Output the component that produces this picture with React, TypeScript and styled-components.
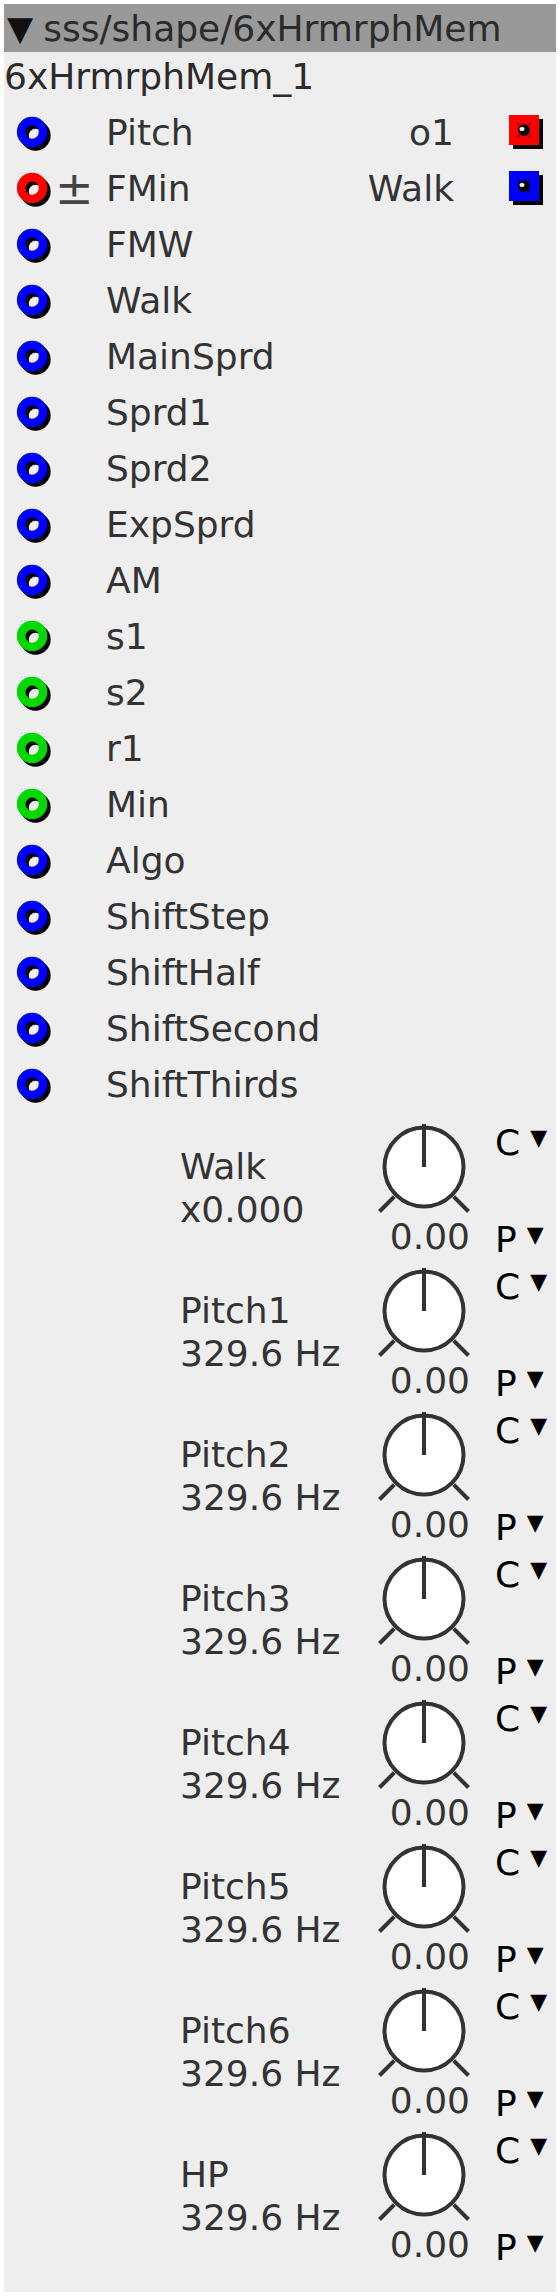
import styled, { createGlobalStyle } from "styled-components";

const GlobalStyle = createGlobalStyle`
    html, body {
        margin: 0;
        padding: 0;
        background: #ffffff;
    }

    body {
        padding: 4px;
        font-family: "DejaVu Sans", "Liberation Sans", sans-serif;
        font-size: 36px;
        color: #333333;
    }
`;

const Panel = styled.div`
    width: 552px;
    background-color: #eeeeee;
    padding-bottom: 24px;
`;

const TitleBar = styled.div`
    height: 48px;
    display: flex;
    align-items: center;
    gap: 10px;
    padding-left: 3px;
    background-color: #999999;
    color: #2b2b2b;
    white-space: nowrap;

    .arrow {
        font-size: 34px;
        color: #111111;
    }
`;

const InstanceName = styled.div`
    height: 48px;
    display: flex;
    align-items: center;
    color: #2b2b2b;
`;

const PortList = styled.div`
    padding-top: 4px;
    padding-bottom: 4px;
`;

const PortRow = styled.div`
    height: 56px;
    display: grid;
    grid-template-columns: 50px 52px 1fr auto 102px;
    align-items: center;
`;

const PortCell = styled.div`
    display: flex;
    align-items: center;
    padding-left: 10px;
    padding-top: 3px;
`;

const SignCell = styled.div`
    padding-left: 1px;
    font-size: 46px;
    line-height: 1;
    color: #444444;
`;

const PortLabel = styled.div`
    white-space: nowrap;
`;

const OutLabel = styled.div`
    text-align: right;
    white-space: nowrap;
`;

const OutCell = styled.div`
    display: flex;
    justify-content: flex-end;
    padding-right: 11px;
    padding-top: 2px;
`;

const KnobList = styled.div`
    display: flex;
    flex-direction: column;
`;

const KnobBlock = styled.div`
    height: 144px;
    display: flex;
    padding-left: 176px;
`;

const KnobText = styled.div`
    width: 198px;
    display: flex;
    flex-direction: column;
    justify-content: center;
    line-height: 43px;
    white-space: nowrap;
`;

const KnobColumn = styled.div`
    width: 92px;
    display: flex;
    flex-direction: column;
    padding-top: 5px;
`;

const KnobValue = styled.div`
    line-height: 40px;
    text-align: right;
    white-space: nowrap;
`;

const ModeColumn = styled.div`
    display: flex;
    flex-direction: column;
    justify-content: space-between;
    padding-top: 7px;
    margin-left: 25px;
`;

const ModeSelect = styled.div`
    line-height: 40px;
    color: #000000;
    display: flex;
    align-items: flex-start;
    gap: 10px;

    span {
        font-size: 22px;
        line-height: 30px;
    }
`;

const portColors: Record<string, string> = {
    blue: "#0000ff",
    red: "#ff0000",
    green: "#00d800",
};

function PortIcon({ color }: { color: string }) {
    return (
        <svg width="42" height="42" viewBox="0 0 42 42">
            <circle cx="22.5" cy="22.5" r="11.5" fill="none" stroke="#000" strokeWidth="9" />
            <circle cx="19" cy="19" r="11.5" fill="none" stroke={portColors[color]} strokeWidth="9" />
        </svg>
    );
}

function OutIcon({ color }: { color: string }) {
    return (
        <svg width="36" height="36" viewBox="0 0 36 36">
            <rect x="4" y="4" width="30" height="30" fill="#000" />
            <rect x="0" y="0" width="30" height="30" fill={portColors[color]} />
            <circle cx="15" cy="15" r="6" fill="#000" />
            <ellipse cx="13" cy="14" rx="2.6" ry="2" fill="#fff" />
            <rect x="8" y="8" width="2" height="2" fill="#000" opacity="0.6" />
            <rect x="20" y="8" width="2" height="2" fill="#000" opacity="0.6" />
            <rect x="8" y="20" width="2" height="2" fill="#000" opacity="0.6" />
            <rect x="20" y="20" width="2" height="2" fill="#000" opacity="0.6" />
        </svg>
    );
}

function Knob() {
    return (
        <svg width="92" height="96" viewBox="0 0 92 96">
            <circle cx="46" cy="46" r="39.5" fill="#fff" stroke="#333" strokeWidth="4" />
            <line x1="46" y1="46" x2="46" y2="3" stroke="#333" strokeWidth="4" />
            <line x1="16.3" y1="75.7" x2="1.5" y2="90.5" stroke="#333" strokeWidth="4" />
            <line x1="75.7" y1="75.7" x2="90.5" y2="90.5" stroke="#333" strokeWidth="4" />
        </svg>
    );
}

const ports = [
    { name: "Pitch", color: "blue", out: { name: "o1", color: "red" } },
    { name: "FMin", color: "red", sign: true, out: { name: "Walk", color: "blue" } },
    { name: "FMW", color: "blue" },
    { name: "Walk", color: "blue" },
    { name: "MainSprd", color: "blue" },
    { name: "Sprd1", color: "blue" },
    { name: "Sprd2", color: "blue" },
    { name: "ExpSprd", color: "blue" },
    { name: "AM", color: "blue" },
    { name: "s1", color: "green" },
    { name: "s2", color: "green" },
    { name: "r1", color: "green" },
    { name: "Min", color: "green" },
    { name: "Algo", color: "blue" },
    { name: "ShiftStep", color: "blue" },
    { name: "ShiftHalf", color: "blue" },
    { name: "ShiftSecond", color: "blue" },
    { name: "ShiftThirds", color: "blue" },
];

const knobs = [
    { name: "Walk", value: "x0.000" },
    { name: "Pitch1", value: "329.6 Hz" },
    { name: "Pitch2", value: "329.6 Hz" },
    { name: "Pitch3", value: "329.6 Hz" },
    { name: "Pitch4", value: "329.6 Hz" },
    { name: "Pitch5", value: "329.6 Hz" },
    { name: "Pitch6", value: "329.6 Hz" },
    { name: "HP", value: "329.6 Hz" },
];

export default function App() {
    return (
        <>
            <GlobalStyle />
            <Panel>
                <TitleBar>
                    <span className="arrow">▼</span>
                    <span>sss/shape/6xHrmrphMem</span>
                </TitleBar>
                <InstanceName>6xHrmrphMem_1</InstanceName>
                <PortList>
                    {ports.map((port) => (
                        <PortRow key={port.name}>
                            <PortCell>
                                <PortIcon color={port.color} />
                            </PortCell>
                            <SignCell>{port.sign ? "±" : ""}</SignCell>
                            <PortLabel>{port.name}</PortLabel>
                            <OutLabel>{port.out ? port.out.name : ""}</OutLabel>
                            <OutCell>{port.out && <OutIcon color={port.out.color} />}</OutCell>
                        </PortRow>
                    ))}
                </PortList>
                <KnobList>
                    {knobs.map((knob) => (
                        <KnobBlock key={knob.name}>
                            <KnobText>
                                <div>{knob.name}</div>
                                <div>{knob.value}</div>
                            </KnobText>
                            <KnobColumn>
                                <Knob />
                                <KnobValue>0.00</KnobValue>
                            </KnobColumn>
                            <ModeColumn>
                                <ModeSelect>C<span>▼</span></ModeSelect>
                                <ModeSelect>P<span>▼</span></ModeSelect>
                            </ModeColumn>
                        </KnobBlock>
                    ))}
                </KnobList>
            </Panel>
        </>
    );
}
